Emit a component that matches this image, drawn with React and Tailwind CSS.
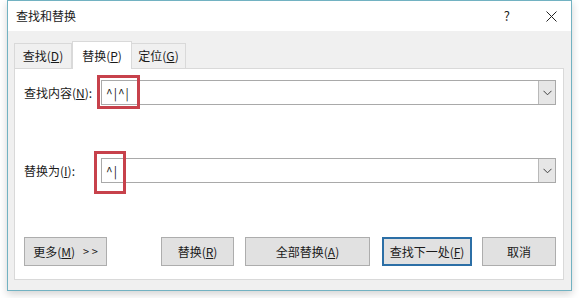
import React from 'react';

const font = { fontFamily: '"Noto Sans CJK SC", "Noto Sans", sans-serif' };

function Chevron() {
  return (
    <svg width="9" height="6" viewBox="0 0 9 6" fill="none" stroke="#404040" strokeWidth="1">
      <path d="M0.5 0.8 L4.5 4.8 L8.5 0.8" />
    </svg>
  );
}

function ComboInput({ value, box }) {
  return (
    <div className="relative flex-1 h-[25px] bg-white border border-[#a9a9a9] flex items-center">
      <span className="pl-[4px] flex-1 text-[12px] text-[#1a1a1a] tracking-[1px]">{value}</span>
      <div className="w-[17px] h-[23px] bg-[#e6e6e6] border-l border-[#b9b9b9] flex items-center justify-center">
        <Chevron />
      </div>
      {/* red annotation box */}
      <div className={`absolute border-[3px] border-[#c7414b] ${box}`} />
    </div>
  );
}

function Btn({ children, w, focused, className = '' }) {
  return (
    <div
      className={`h-[29px] flex items-center justify-center text-[12px] text-[#1a1a1a] bg-[#e1e1e1] ${
        focused ? 'border-2 border-[#2c6fa6]' : 'border border-[#adadad]'
      } ${w} ${className}`}
    >
      {children}
    </div>
  );
}

export default function App() {
  return (
    <div className="w-[579px] h-[298px] bg-white pl-[7px]" style={font}>
      <div className="w-[565px] h-[291px] border border-[#72b2c2] flex flex-col shadow-[0_3px_8px_rgba(0,0,0,0.18)]">
        {/* title bar */}
        <div className="h-[30px] bg-white flex items-center pl-[8px] pr-[14px]">
          <span className="text-[12px] text-[#1a1a1a]">查找和替换</span>
          <span className="ml-auto text-[13px] text-[#222] mr-[36px]">?</span>
          <svg width="11" height="11" viewBox="0 0 11 11" stroke="#222" strokeWidth="1">
            <path d="M0.5 0.5 L10.5 10.5 M10.5 0.5 L0.5 10.5" />
          </svg>
        </div>

        {/* body */}
        <div className="flex-1 bg-[#f0f0f0] pl-[6px] pr-[7px] pt-[10px] pb-[10px] flex flex-col">
          {/* tabs */}
          <div className="h-[27px] flex items-end text-[12px] text-[#1a1a1a]">
            <div className="w-[58px] h-[25px] border border-b-0 border-[#d9d9d9] flex items-center justify-center">
              查找(<u>D</u>)
            </div>
            <div className="w-[60px] h-[28px] -mb-px bg-white border border-b-0 border-[#d9d9d9] flex items-center justify-center relative z-10">
              替换(<u>P</u>)
            </div>
            <div className="w-[54px] h-[25px] border border-b-0 border-l-0 border-[#d9d9d9] flex items-center justify-center">
              定位(<u>G</u>)
            </div>
          </div>

          {/* panel */}
          <div className="flex-1 bg-white border border-[#d9d9d9] pt-[11px] pl-[9px] pr-[7px] flex flex-col">
            <div className="flex items-center">
              <span className="w-[77px] text-[12px] text-[#1a1a1a]">
                查找内容(<u>N</u>):
              </span>
              <ComboInput value="^|^|" box="left-[-5px] top-[-6px] w-[43px] h-[34px]" />
            </div>

            <div className="flex items-center mt-[53px]">
              <span className="w-[77px] text-[12px] text-[#1a1a1a]">
                替换为(<u>I</u>):
              </span>
              <ComboInput value="^|" box="left-[-8px] top-[-8px] w-[32px] h-[43px]" />
            </div>

            <div className="flex items-center mt-[54px]">
              <Btn w="w-[83px]">
                更多(<u>M</u>)<span className="ml-[8px] text-[11px]">&gt; &gt;</span>
              </Btn>
              <Btn w="w-[73px]" className="ml-[54px]">
                替换(<u>R</u>)
              </Btn>
              <Btn w="w-[125px]" className="ml-[11px]">
                全部替换(<u>A</u>)
              </Btn>
              <Btn w="w-[90px]" focused className="ml-[12px]">
                查找下一处(<u>F</u>)
              </Btn>
              <Btn w="w-[74px]" className="ml-[10px]">
                取消
              </Btn>
            </div>
          </div>
        </div>
      </div>
    </div>
  );
}
